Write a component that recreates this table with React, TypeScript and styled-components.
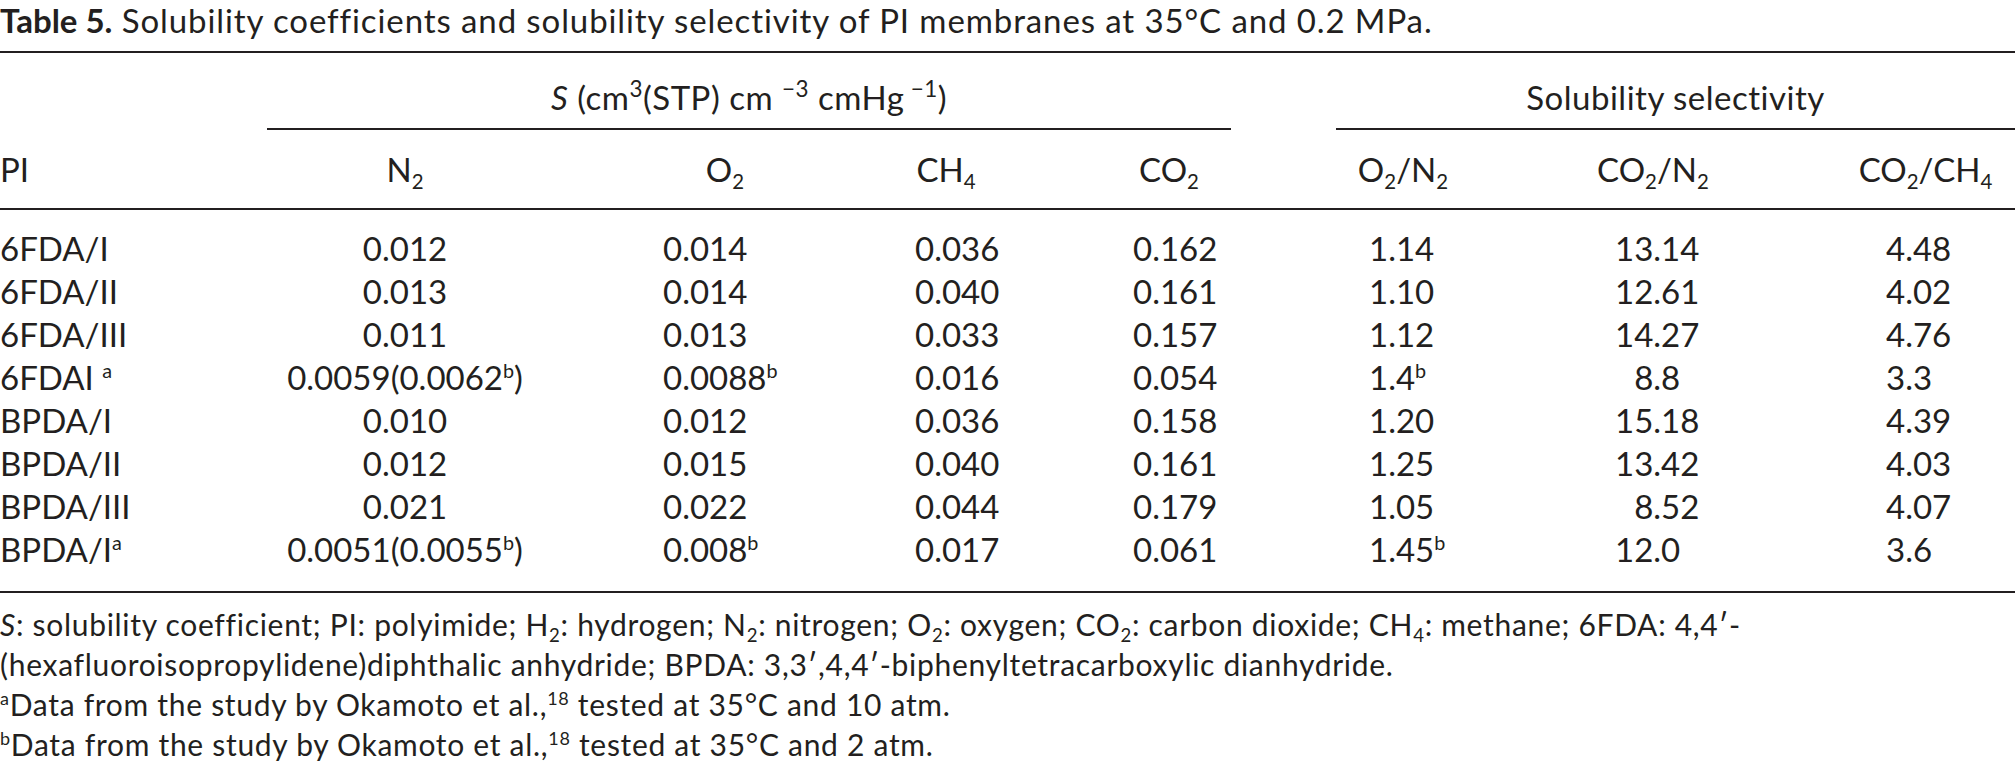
import React, { ReactNode } from "react";
import styled, { createGlobalStyle } from "styled-components";

const ink = "#231f20";

const GlobalStyle = createGlobalStyle`
  html, body {
    margin: 0;
    padding: 0;
    background: #ffffff;
  }
  body {
    font-family: Lato, "Open Sans", "Liberation Sans", sans-serif;
    color: ${ink};
  }
`;

const Page = styled.div`
  width: 2015px;
  height: 766px;
  overflow: hidden;
`;

const Title = styled.div`
  font-size: 33px;
  line-height: 40px;
  letter-spacing: 0.9px;
  white-space: nowrap;
  margin-bottom: 11px;
`;

const TitleLabel = styled.span`
  font-weight: 700;
  letter-spacing: 0;
`;

const Table = styled.table`
  width: 2015px;
  table-layout: fixed;
  border-collapse: separate;
  border-spacing: 0;
  border-top: 2px solid ${ink};
  border-bottom: 2px solid ${ink};
  font-size: 33px;
  font-variant-numeric: tabular-nums;
`;

const SpanCell = styled.th`
  padding: 24px 0 0;
  font-weight: 400;
  line-height: 40px;
  vertical-align: top;
  white-space: nowrap;
`;

// group label over several columns, underlined by a short rule
const SpanLabel = styled.div<{ $inset?: string }>`
  margin: ${(p) => p.$inset || "0"};
  padding-bottom: 11px;
  border-bottom: 2px solid ${ink};
  text-align: center;
  letter-spacing: 0.5px;
`;

const HeadCell = styled.th<{ $align: string }>`
  padding: 19px 0;
  font-weight: 400;
  line-height: 40px;
  text-align: ${(p) => p.$align};
  white-space: nowrap;
  border-bottom: 2px solid ${ink};
`;

const Row = styled.tr`
  &:first-child td {
    padding-top: 17px;
  }
  &:last-child td {
    padding-bottom: 20px;
  }
`;

const Cell = styled.td<{ $align: string; $pad: number }>`
  padding: 0 0 0 ${(p) => p.$pad}px;
  line-height: 43px;
  text-align: ${(p) => p.$align};
  white-space: nowrap;
`;

const IntPart = styled.span`
  display: inline-block;
  width: 2ch;
  text-align: right;
`;

const Sup = styled.sup<{ $big?: boolean }>`
  font-size: ${(p) => (p.$big ? "0.68em" : "0.6em")};
  line-height: 0;
  vertical-align: ${(p) => (p.$big ? "0.58em" : "0.62em")};
`;

const Sub = styled.sub`
  font-size: 0.62em;
  line-height: 0;
  vertical-align: -0.32em;
`;

const Notes = styled.div`
  margin-top: 11px;
  font-size: 30px;
  line-height: 40px;
  letter-spacing: 0.7px;
  white-space: nowrap;
`;

const Note = styled.div``;

const Italic = styled.span`
  font-style: italic;
`;

type Column = {
  width: number;
  head: ReactNode;
  headAlign: string;
  align: string;
  pad: number;
};

const columns: Column[] = [
  { width: 250, head: "PI", headAlign: "left", align: "left", pad: 0 },
  { width: 310, head: <>N<Sub>2</Sub></>, headAlign: "center", align: "center", pad: 0 },
  { width: 330, head: <>O<Sub>2</Sub></>, headAlign: "center", align: "left", pad: 103 },
  { width: 112, head: <>CH<Sub>4</Sub></>, headAlign: "center", align: "left", pad: 25 },
  { width: 334, head: <>CO<Sub>2</Sub></>, headAlign: "center", align: "left", pad: 131 },
  { width: 134, head: <>O<Sub>2</Sub>/N<Sub>2</Sub></>, headAlign: "center", align: "left", pad: 33 },
  { width: 366, head: <>CO<Sub>2</Sub>/N<Sub>2</Sub></>, headAlign: "center", align: "left", pad: 145 },
  { width: 179, head: <>CO<Sub>2</Sub>/CH<Sub>4</Sub></>, headAlign: "center", align: "left", pad: 50 },
];

// decimal aligned value: integer part sits in a fixed right-aligned box
const Dec = ({ v }: { v: string }) => {
  const [i, f] = v.split(".");
  return (
    <>
      <IntPart>{i}</IntPart>.{f}
    </>
  );
};

const b = <Sup>b</Sup>;

const rows: ReactNode[][] = [
  ["6FDA/I", "0.012", "0.014", "0.036", "0.162", "1.14", <Dec v="13.14" />, "4.48"],
  ["6FDA/II", "0.013", "0.014", "0.040", "0.161", "1.10", <Dec v="12.61" />, "4.02"],
  ["6FDA/III", "0.011", "0.013", "0.033", "0.157", "1.12", <Dec v="14.27" />, "4.76"],
  [
    <>6FDAI <Sup>a</Sup></>,
    <>0.0059(0.0062{b})</>,
    <>0.0088{b}</>,
    "0.016",
    "0.054",
    <>1.4{b}</>,
    <Dec v="8.8" />,
    "3.3",
  ],
  ["BPDA/I", "0.010", "0.012", "0.036", "0.158", "1.20", <Dec v="15.18" />, "4.39"],
  ["BPDA/II", "0.012", "0.015", "0.040", "0.161", "1.25", <Dec v="13.42" />, "4.03"],
  ["BPDA/III", "0.021", "0.022", "0.044", "0.179", "1.05", <Dec v="8.52" />, "4.07"],
  [
    <>BPDA/I<Sup>a</Sup></>,
    <>0.0051(0.0055{b})</>,
    <>0.008{b}</>,
    "0.017",
    "0.061",
    <>1.45{b}</>,
    <Dec v="12.0" />,
    "3.6",
  ],
];

export default function App() {
  return (
    <Page>
      <GlobalStyle />
      <Title>
        <TitleLabel>Table 5.</TitleLabel> Solubility coefficients and solubility
        selectivity of PI membranes at 35°C and 0.2 MPa.
      </Title>
      <Table>
        <colgroup>
          {columns.map((c, i) => (
            <col key={i} style={{ width: c.width }} />
          ))}
        </colgroup>
        <thead>
          <tr>
            <SpanCell />
            <SpanCell colSpan={4}>
              <SpanLabel $inset="0 105px 0 17px">
                <Italic>S</Italic> (cm<Sup $big>3</Sup>(STP) cm <Sup $big>−3</Sup> cmHg
                <Sup $big> −1</Sup>)
              </SpanLabel>
            </SpanCell>
            <SpanCell colSpan={3}>
              <SpanLabel>Solubility selectivity</SpanLabel>
            </SpanCell>
          </tr>
          <tr>
            {columns.map((c, i) => (
              <HeadCell key={i} $align={c.headAlign}>
                {c.head}
              </HeadCell>
            ))}
          </tr>
        </thead>
        <tbody>
          {rows.map((r, ri) => (
            <Row key={ri}>
              {r.map((v, ci) => (
                <Cell key={ci} $align={columns[ci].align} $pad={columns[ci].pad}>
                  {v}
                </Cell>
              ))}
            </Row>
          ))}
        </tbody>
      </Table>
      <Notes>
        <Note>
          <Italic>S</Italic>: solubility coefficient; PI: polyimide; H<Sub>2</Sub>:
          hydrogen; N<Sub>2</Sub>: nitrogen; O<Sub>2</Sub>: oxygen; CO<Sub>2</Sub>:
          carbon dioxide; CH<Sub>4</Sub>: methane; 6FDA: 4,4′-
        </Note>
        <Note>
          (hexafluoroisopropylidene)diphthalic anhydride; BPDA: 3,3′,4,4′-biphenyltetracarboxylic
          dianhydride.
        </Note>
        <Note>
          <Sup>a</Sup>Data from the study by Okamoto et al.,<Sup>18</Sup> tested at
          35°C and 10 atm.
        </Note>
        <Note>
          <Sup>b</Sup>Data from the study by Okamoto et al.,<Sup>18</Sup> tested at
          35°C and 2 atm.
        </Note>
      </Notes>
    </Page>
  );
}
